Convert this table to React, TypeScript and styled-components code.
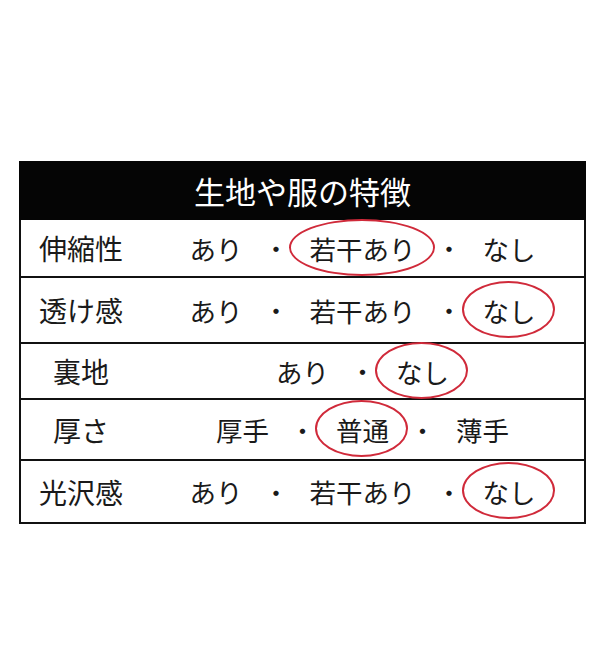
import { createGlobalStyle, styled } from "styled-components";
import { Fragment } from "react";

type Option = { text: string; circled?: boolean };
type Feature = { label: string; height: number; options: Option[] };

const features: Feature[] = [
  {
    label: "伸縮性",
    height: 56,
    options: [{ text: "あり" }, { text: "若干あり", circled: true }, { text: "なし" }],
  },
  {
    label: "透け感",
    height: 66,
    options: [{ text: "あり" }, { text: "若干あり" }, { text: "なし", circled: true }],
  },
  {
    label: "裏地",
    height: 56,
    options: [{ text: "あり" }, { text: "なし", circled: true }],
  },
  {
    label: "厚さ",
    height: 61,
    options: [{ text: "厚手" }, { text: "普通", circled: true }, { text: "薄手" }],
  },
  {
    label: "光沢感",
    height: 63,
    options: [{ text: "あり" }, { text: "若干あり" }, { text: "なし", circled: true }],
  },
];

const GlobalStyle = createGlobalStyle`
  html, body {
    margin: 0;
    background: #fff;
  }
  body {
    font-family: "Noto Sans CJK JP", "Noto Sans", sans-serif;
    color: #1a1a1a;
  }
`;

const Page = styled.div`
  width: 600px;
  height: 660px;
  box-sizing: border-box;
  padding: 161px 14px 0 19px;
`;

const Table = styled.div`
  border: 2px solid #111;
  border-top: none;
  display: flex;
  flex-direction: column;
`;

const Header = styled.div`
  height: 59px;
  background: #050505;
  color: #fff;
  font-size: 31px;
  display: flex;
  align-items: center;
  justify-content: center;
  margin: 0 -2px;
`;

const Row = styled.div<{ $h: number }>`
  height: ${(p) => p.$h}px;
  box-sizing: border-box;
  display: grid;
  grid-template-columns: 120px 1fr;
  align-items: center;
  & + & {
    border-top: 2px solid #111;
  }
`;

const Label = styled.div`
  font-size: 28px;
  text-align: center;
`;

const Options = styled.div`
  display: flex;
  justify-content: center;
  align-items: center;
  gap: 21px;
  font-size: 26.5px;
`;

const Item = styled.span<{ $circled?: boolean }>`
  position: relative;
  &::before {
    content: "";
    display: ${(p) => (p.$circled ? "block" : "none")};
    position: absolute;
    left: -21px;
    right: -19px;
    top: -10px;
    bottom: -8px;
    border: 2px solid #d02a3a;
    border-radius: 50%;
  }
`;

const Dot = styled.span`
  font-size: 25px;
`;

export default function App() {
  return (
    <Page>
      <GlobalStyle />
      <Table>
        <Header>生地や服の特徴</Header>
        {features.map((f) => (
          <Row key={f.label} $h={f.height}>
            <Label>{f.label}</Label>
            <Options>
              {f.options.map((o, i) => (
                <Fragment key={o.text}>
                  {i > 0 && <Dot>・</Dot>}
                  <Item $circled={o.circled}>{o.text}</Item>
                </Fragment>
              ))}
            </Options>
          </Row>
        ))}
      </Table>
    </Page>
  );
}
